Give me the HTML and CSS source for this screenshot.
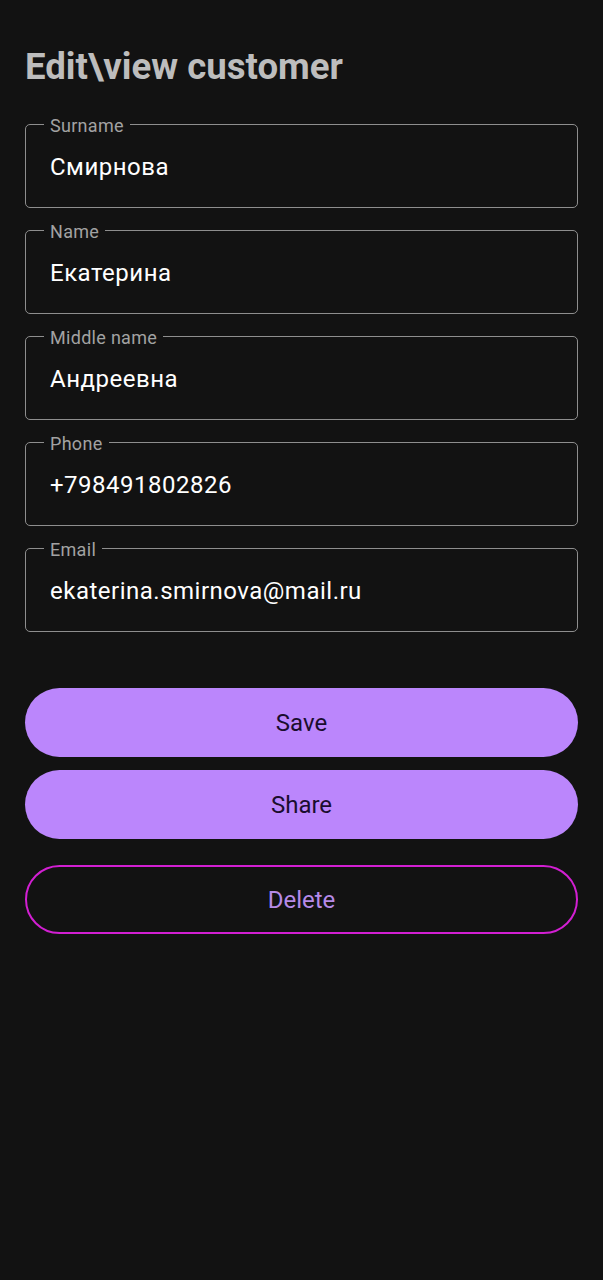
FILE: index.html
```
<!DOCTYPE html>
<html lang="en">
<head>
<meta charset="utf-8">
<title>Edit\view customer</title>
<link rel="stylesheet" href="styles.css">
</head>
<body>
<main class="page">
  <h1 class="title">Edit\view customer</h1>
  <form class="form">
    <fieldset class="field">
      <legend class="field-label">Surname</legend>
      <div class="field-value">Смирнова</div>
    </fieldset>
    <fieldset class="field">
      <legend class="field-label">Name</legend>
      <div class="field-value">Екатерина</div>
    </fieldset>
    <fieldset class="field">
      <legend class="field-label">Middle name</legend>
      <div class="field-value">Андреевна</div>
    </fieldset>
    <fieldset class="field">
      <legend class="field-label">Phone</legend>
      <div class="field-value">+798491802826</div>
    </fieldset>
    <fieldset class="field">
      <legend class="field-label">Email</legend>
      <div class="field-value">ekaterina.smirnova@mail.ru</div>
    </fieldset>
    <div class="actions">
      <button type="button" class="btn btn-filled">Save</button>
      <button type="button" class="btn btn-filled">Share</button>
      <button type="button" class="btn btn-outline">Delete</button>
    </div>
  </form>
</main>
</body>
</html>
```
FILE: styles.css
```
html, body {
  margin: 0;
  padding: 0;
  background: #121212;
}
body {
  font-family: Roboto, "Noto Sans", "DejaVu Sans", sans-serif;
  color: #ffffff;
}
.page {
  padding: 45px 25px 0;
}
.title {
  margin: 0;
  font-size: 36.6px;
  line-height: 44px;
  font-weight: 700;
  color: #bdbdbd;
}
.form {
  margin-top: 23px;
}
.field {
  margin: 0 0 10px;
  padding: 0 24px 26px 18px;
  border: 1px solid #8e8e8e;
  border-radius: 5px;
  min-width: 0;
}
.field-label {
  padding: 4px 6px 0;
  font-size: 18px;
  line-height: 20px;
  color: #a2a2a2;
  letter-spacing: 0.3px;
}
.field-value {
  margin-top: 17px;
  padding-left: 6px;
  font-size: 24px;
  line-height: 28px;
  color: #ffffff;
  letter-spacing: 0.5px;
}
.actions {
  margin-top: 56px;
  display: flex;
  flex-direction: column;
}
.btn {
  height: 69px;
  border-radius: 35px;
  font-family: Roboto, "Noto Sans", sans-serif;
  font-size: 24px;
  font-weight: 400;
  cursor: pointer;
  padding: 0;
}
.btn-filled {
  background: #bb86fc;
  border: none;
  color: #1a0d2e;
  margin-bottom: 13px;
}
.btn-filled + .btn-outline {
  margin-top: 13px;
}
.btn-outline {
  background: transparent;
  border: 2px solid #d21fd2;
  color: #b68ae8;
}
```
